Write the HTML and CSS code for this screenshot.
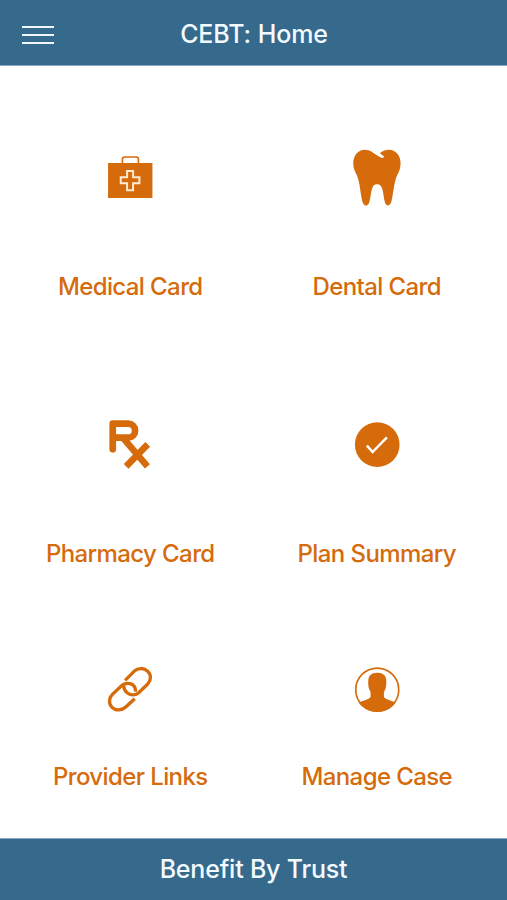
FILE: index.html
```html
<!DOCTYPE html>
<html lang="en">
<head>
    <meta charset="UTF-8">
    <meta name="viewport" content="width=device-width, initial-scale=1.0">
    <title>CEBT: Home</title>
    <link rel="stylesheet" href="styles.css">
</head>
<body>
    <header class="header">
        <button class="menu-btn" aria-label="Menu">
            <span></span>
            <span></span>
            <span></span>
        </button>
        <h1 class="title">CEBT: Home</h1>
    </header>

    <main class="menu">
        <a class="menu-item" href="#">
            <svg class="icon" viewBox="15.75 6 180 180">
                <path d="M83 56V43q0-7 7-7h34q7 0 7 7v13" fill="none" stroke="currentColor" stroke-width="5"/>
                <rect x="40" y="54" width="133" height="105" fill="currentColor"/>
                <path d="M97 78h18v19h19v18h-19v21H97v-21H78V97h19z" fill="none" stroke="#fdebd3" stroke-width="6"/>
            </svg>
            <span class="label">Medical Card</span>
        </a>
        <a class="menu-item" href="#">
            <svg class="icon" viewBox="20.25 20 180 180">
                <path d="M74 28C89 28 98 37 108 43C114 47 120 52 126 53C130 53 132 50 130 47L119 39C126 32 135 28 146 28C166 28 181 45 181 68C181 83 177 94 170 106C162 125 160 151 155 177C152 198 139 202 134 186C129 168 130 150 122 137C117 130 104 130 99 137C91 150 93 168 87 186C82 202 69 198 65 179C60 155 59 128 51 107C44 94 39 84 39 69C39 45 54 28 74 28Z" fill="currentColor"/>
            </svg>
            <span class="label">Dental Card</span>
        </a>
        <a class="menu-item" href="#">
            <svg class="icon" viewBox="15.75 14 180 180">
                <g fill="none" stroke="currentColor" stroke-width="20" stroke-linejoin="round">
                    <path d="M54 117V40h46a21 21 0 0 1 0 42H54" stroke-linecap="round"/>
                    <path d="M84 82L158 168M159 102L94 168"/>
                </g>
            </svg>
            <span class="label">Pharmacy Card</span>
        </a>
        <a class="menu-item" href="#">
            <svg class="icon" viewBox="20.25 15 180 180">
                <circle cx="111" cy="104" r="67" fill="currentColor"/>
                <path d="M80 107l17 19 43-44" fill="none" stroke="#fff" stroke-width="7.5"/>
            </svg>
            <span class="label">Plan Summary</span>
        </a>
        <a class="menu-item" href="#">
            <svg class="icon" viewBox="15.75 15 180 180">
                <g fill="none" stroke="currentColor" stroke-width="10">
                    <path d="M91 76L118 49C130 38 147 38 158 48C170 59 170 75 159 87L131 114C121 122 106 121 97 113C90 107 87 101 87 93"/>
                    <path d="M120 131L93 156C81 167 63 168 52 157C41 146 42 129 53 118L82 91C92 83 107 83 116 91C121 96 123 101 122 110"/>
                </g>
            </svg>
            <span class="label">Provider Links</span>
        </a>
        <a class="menu-item" href="#">
            <svg class="icon" viewBox="20.25 15 180 180">
                <circle cx="111" cy="104" r="64.5" fill="none" stroke="currentColor" stroke-width="5"/>
                <path d="M111 53C129 53 138 62 138 77C139 91 137 102 131 111V126C135 133 151 136 166 143C155 160 134 170 111 170C88 170 67 160 56 143C71 136 87 133 91 126V111C85 102 83 91 84 77C84 62 93 53 111 53Z" fill="currentColor"/>
            </svg>
            <span class="label">Manage Case</span>
        </a>
    </main>

    <footer class="footer">Benefit By Trust</footer>
</body>
</html>
```
FILE: styles.css
```css
* {
    box-sizing: border-box;
}

body {
    margin: 0;
    height: 100vh;
    display: flex;
    flex-direction: column;
    font-family: Inter, "Liberation Sans", sans-serif;
    background: #fff;
    color: #d56b0b;
}

.header {
    height: 66px;
    padding: 0 21px 0 22px;
    display: grid;
    grid-template-columns: 32px 1fr 32px;
    align-items: center;
    background: #356a8c;
    border-bottom: 1px solid #84a9bf;
    color: #f3faff;
}

.menu-btn {
    display: flex;
    flex-direction: column;
    gap: 6px;
    margin-top: 4px;
    padding: 0;
    border: none;
    background: none;
    cursor: pointer;
}

.menu-btn span {
    width: 32px;
    height: 2px;
    background: #f0f8ff;
}

.title {
    margin: 3px 0 0;
    text-align: center;
    font-size: 25px;
    font-weight: 500;
    line-height: 30px;
    letter-spacing: -0.1px;
}

.menu {
    flex: 1;
    display: grid;
    grid-template-columns: 1fr 1fr;
    grid-template-rows: 268px 245px 1fr;
    padding: 81px 7px 0;
}

.menu-item {
    display: flex;
    flex-direction: column;
    align-items: center;
    color: inherit;
    text-decoration: none;
}

.icon {
    width: 60px;
    height: 60px;
}

.label {
    margin-top: 65px;
    font-size: 24px;
    font-weight: 450;
    line-height: 30px;
    letter-spacing: -0.6px;
}

.menu-item:nth-child(n+3) .label {
    margin-top: 64px;
}

/* last row sits tighter under its icons */
.menu-item:nth-child(n+5) .label {
    margin-top: 42px;
}

.footer {
    height: 62px;
    padding-top: 15px;
    background: #356a8c;
    border-top: 1px solid #84a9bf;
    color: #f3faff;
    text-align: center;
    font-size: 25px;
    font-weight: 500;
    line-height: 30px;
    letter-spacing: -0.2px;
}
```
